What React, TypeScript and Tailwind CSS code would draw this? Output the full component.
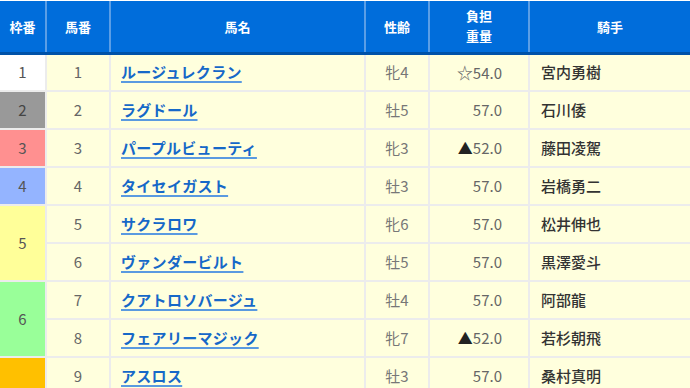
import React from "react";

type Row = {
  frame?: { n: number; bg: string; span: number; text: string };
  num: number;
  name: string;
  sex: string;
  weight: string;
  jockey: string;
};

const rows: Row[] = [
  { frame: { n: 1, bg: "bg-white", span: 1, text: "text-[#555]" }, num: 1, name: "ルージュレクラン", sex: "牝4", weight: "☆54.0", jockey: "宮内勇樹" },
  { frame: { n: 2, bg: "bg-[#999999]", span: 1, text: "text-[#444]" }, num: 2, name: "ラグドール", sex: "牡5", weight: "57.0", jockey: "石川倭" },
  { frame: { n: 3, bg: "bg-[#ff9090]", span: 1, text: "text-[#555]" }, num: 3, name: "パープルビューティ", sex: "牝3", weight: "▲52.0", jockey: "藤田凌駕" },
  { frame: { n: 4, bg: "bg-[#94b4ff]", span: 1, text: "text-[#555]" }, num: 4, name: "タイセイガスト", sex: "牡3", weight: "57.0", jockey: "岩橋勇二" },
  { frame: { n: 5, bg: "bg-[#ffff99]", span: 2, text: "text-[#555]" }, num: 5, name: "サクラロワ", sex: "牝6", weight: "57.0", jockey: "松井伸也" },
  { num: 6, name: "ヴァンダービルト", sex: "牡5", weight: "57.0", jockey: "黒澤愛斗" },
  { frame: { n: 6, bg: "bg-[#99ff99]", span: 2, text: "text-[#555]" }, num: 7, name: "クアトロソバージュ", sex: "牡4", weight: "57.0", jockey: "阿部龍" },
  { num: 8, name: "フェアリーマジック", sex: "牝7", weight: "▲52.0", jockey: "若杉朝飛" },
  { frame: { n: 7, bg: "bg-[#ffc000]", span: 1, text: "text-transparent" }, num: 9, name: "アスロス", sex: "牡3", weight: "57.0", jockey: "桑村真明" },
];

function Weight({ w }: { w: string }) {
  const mark = w.startsWith("☆") || w.startsWith("▲") ? w[0] : "";
  const val = mark ? w.slice(1) : w;
  return (
    <span>
      {mark === "▲" && <span className="text-[#222] text-[15px]">▲</span>}
      {mark === "☆" && <span className="text-[#666] text-[16px]">☆</span>}
      {val}
    </span>
  );
}

export default function App() {
  const td = "border-2 border-[#ececec] p-0";
  const th = "border-x-2 border-x-[#5b9ee6] border-b-[3px] border-b-[#0052a8] font-bold";
  return (
    <div
      className="w-[690px] h-[388px] overflow-hidden bg-white"
      style={{ fontFamily: '"Noto Sans CJK JP", "Noto Sans", sans-serif' }}
    >
      <table className="table-fixed border-collapse w-[690px] mt-[1px]">
        <colgroup>
          <col className="w-[46px]" />
          <col className="w-[64px]" />
          <col className="w-[255px]" />
          <col className="w-[64px]" />
          <col className="w-[100px]" />
          <col className="w-[161px]" />
        </colgroup>
        <thead>
          <tr className="h-[52px] bg-[#006ddb] text-white text-[13px] font-bold">
            <th className={`${th} border-l-0`}>枠番</th>
            <th className={th}>馬番</th>
            <th className={th}>馬名</th>
            <th className={th}>性齢</th>
            <th className={`${th} leading-[20px]`}>
              負担
              <br />
              重量
            </th>
            <th className={`${th} border-r-0`}>騎手</th>
          </tr>
        </thead>
        <tbody className="text-[15px]">
          {rows.map((r) => (
            <tr key={r.num} className="h-[38px] bg-[#ffffdd]">
              {r.frame && (
                <td
                  rowSpan={r.frame.span}
                  className={`${td} border-l-0 ${r.frame.bg} ${r.frame.text} text-center`}
                >
                  {r.frame.n}
                </td>
              )}
              <td className={`${td} text-center text-[#666]`}>{r.num}</td>
              <td className={`${td} pl-[10px]`}>
                <a
                  href="#"
                  className="text-[#1668c8] font-bold underline decoration-[#5a9ae0] decoration-2 underline-offset-[3px] tracking-[0.3px]"
                >
                  {r.name}
                </a>
              </td>
              <td className={`${td} text-center text-[#777]`}>{r.sex}</td>
              <td className={`${td} text-right pr-[26px] text-[#666]`}>
                <Weight w={r.weight} />
              </td>
              <td className={`${td} border-r-0 pl-[11px] text-[#333] font-medium`}>{r.jockey}</td>
            </tr>
          ))}
        </tbody>
      </table>
    </div>
  );
}
